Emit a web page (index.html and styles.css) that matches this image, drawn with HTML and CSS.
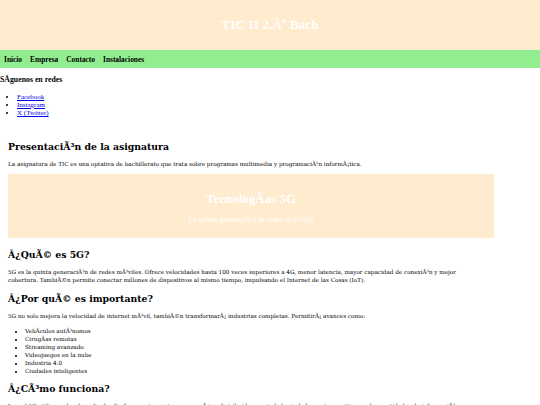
FILE: index.html
```html
<!DOCTYPE html>
<html lang="es">
<head>
<meta charset="utf-8">
<title>TIC II</title>
<link rel="stylesheet" href="styles.css">
</head>
<body>
<header class="site-header">
  <h1 class="site-title">TIC II 2.Âº Bach</h1>
</header>
<nav class="site-nav">
  <a href="#">Inicio</a>
  <a href="#">Empresa</a>
  <a href="#">Contacto</a>
  <a href="#">Instalaciones</a>
</nav>
<aside class="social">
  <h3 class="social-title">SÃ­guenos en redes</h3>
  <ul class="social-list">
    <li><a href="#">Facebook</a></li>
    <li><a href="#">Instagram</a></li>
    <li><a href="#">X (Twitter)</a></li>
  </ul>
</aside>
<main class="content">
  <h2 class="sec-title first">PresentaciÃ³n de la asignatura</h2>
  <p class="text">La asignatura de TIC es una optativa de bachillerato que trata sobre programas multimedia y programaciÃ³n informÃ¡tica.</p>
  <section class="banner">
    <h2 class="banner-title">TecnologÃ­as 5G</h2>
    <p class="banner-sub">La quinta generaciÃ³n de redes mÃ³viles</p>
  </section>
  <h2 class="sec-title after-banner">Â¿QuÃ© es 5G?</h2>
  <p class="text">5G es la quinta generaciÃ³n de redes mÃ³viles. Ofrece velocidades hasta 100 veces superiores a 4G, menor latencia, mayor capacidad de conexiÃ³n y mejor cobertura. TambiÃ©n permite conectar millones de dispositivos al mismo tiempo, impulsando el Internet de las Cosas (IoT).</p>
  <h2 class="sec-title">Â¿Por quÃ© es importante?</h2>
  <p class="text">5G no solo mejora la velocidad de internet mÃ³vil, tambiÃ©n transformarÃ¡ industrias completas. PermitirÃ¡ avances como:</p>
  <ul class="text-list">
    <li>VehÃ­culos autÃ³nomos</li>
    <li>CirugÃ­as remotas</li>
    <li>Streaming avanzado</li>
    <li>Videojuegos en la nube</li>
    <li>Industria 4.0</li>
    <li>Ciudades inteligentes</li>
  </ul>
  <h2 class="sec-title after-list">Â¿CÃ³mo funciona?</h2>
  <p class="text">La red 5G utiliza ondas de radio de alta frecuencia y antenas pequeÃ±as distribuidas por toda la ciudad para transmitir grandes cantidades de informaciÃ³n.</p>
</main>
</body>
</html>
```

FILE: styles.css
```css
html, body {
  margin: 0;
  padding: 0;
  background: #ffffff;
  color: #000000;
  font-family: "Liberation Serif", serif;
}

.site-header {
  height: 50px;
  background: #ffebcd;
  display: flex;
  align-items: center;
  justify-content: center;
}

.site-title {
  margin: 0;
  color: #ffffff;
  font-size: 13.4px;
  font-weight: bold;
}

.site-nav {
  height: 18px;
  background: #90ee90;
  display: flex;
  align-items: center;
  gap: 8px;
  padding-left: 4px;
}

.site-nav a {
  color: #000000;
  text-decoration: none;
  font-weight: bold;
  font-size: 7.4px;
}

.social {
  padding-top: 7px;
}

.social-title {
  margin: 0 0 9px 0;
  font-size: 7.8px;
  font-weight: bold;
}

.social-list {
  margin: 0;
  padding-left: 17px;
  font-size: 7px;
  line-height: 8px;
}

.social-list a {
  color: #0000ee;
}

.content {
  width: 486px;
  padding: 0 8px;
  margin-top: 23px;
  font-family: "DejaVu Serif", serif;
}

.sec-title {
  margin: 8px 0 6px 0;
  font-size: 9.3px;
  font-weight: bold;
  line-height: 14px;
}

.sec-title.first {
  margin-top: 0;
}

.sec-title.after-banner {
  margin-top: 10px;
}

.sec-title.after-list {
  margin-top: 6px;
}

.text {
  margin: 0;
  max-width: 458px;
  font-size: 5.67px;
  line-height: 8px;
}

.text-list {
  margin: 7px 0 0 0;
  padding-left: 17px;
  font-size: 5.67px;
  line-height: 8.1px;
}

.banner {
  margin-top: 6px;
  height: 64px;
  box-sizing: border-box;
  padding-top: 17px;
  background: #ffebcd;
  text-align: center;
  color: #ffffff;
  font-family: "Liberation Serif", serif;
}

.banner-title {
  margin: 0;
  font-size: 13px;
  line-height: 16px;
  font-weight: bold;
}

.banner-sub {
  margin: 7.5px 0 0 0;
  font-size: 7.6px;
  line-height: 9px;
}
```
